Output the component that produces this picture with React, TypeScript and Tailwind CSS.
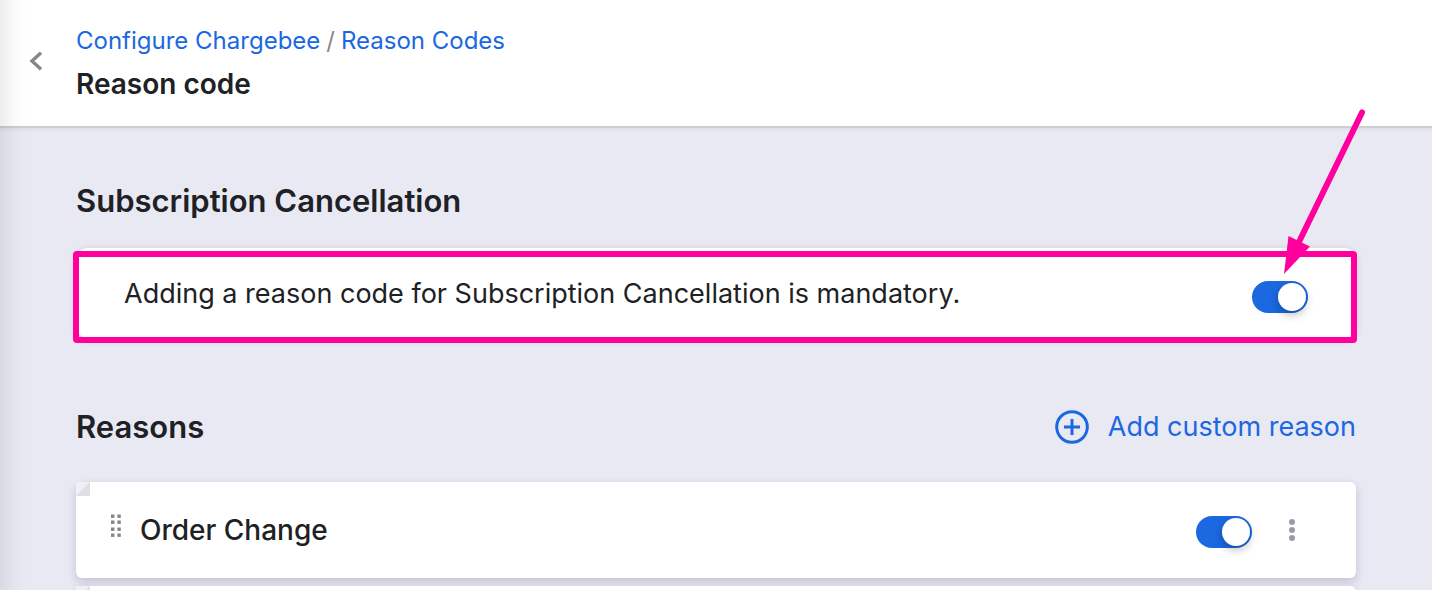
import { useState } from "react";

interface ToggleProps {
  label: string;
}

function Toggle({ label }: ToggleProps) {
  const [on, setOn] = useState(true);

  return (
    <input
      type="checkbox"
      role="switch"
      aria-label={label}
      checked={on}
      onChange={() => setOn(!on)}
      className="flex h-8 w-14 shrink-0 cursor-pointer appearance-none items-center rounded-full bg-gray-400 px-0.5 before:block before:size-7 before:rounded-full before:bg-white before:shadow-[0_4px_8px_rgba(0,0,0,0.25)] checked:justify-end checked:bg-[#1b68e0]"
    />
  );
}

function DragHandle() {
  return (
    <svg width="12" height="24" viewBox="0 0 12 24" fill="#858587" aria-hidden="true">
      {[0, 6, 13, 19].map((y) => (
        <g key={y}>
          <rect x="1" y={y + 0.5} width="3.4" height="3.4" />
          <rect x="7.4" y={y + 0.5} width="3.4" height="3.4" />
        </g>
      ))}
    </svg>
  );
}

function ReasonRow({ name }: { name?: string }) {
  return (
    <li className="flex h-24 shrink-0 rounded-md bg-white shadow-[0_4px_10px_rgba(40,40,90,0.2)]">
      <svg width="14" height="14" className="shrink-0" aria-hidden="true">
        <path d="M0 0H14V14H0Z" fill="#efeff4" />
        <path d="M14 0V14H0Z" fill="#dedee4" />
      </svg>
      {name && (
        <div className="flex flex-1 items-center pr-14 pl-5">
          <button type="button" aria-label={`Move ${name}`} className="mr-[18px] mb-2 cursor-grab">
            <DragHandle />
          </button>
          <span className="flex-1 text-[28px] font-medium">{name}</span>
          <div className="mt-1">
            <Toggle label={name} />
          </div>
          <button type="button" aria-label={`${name} options`} className="ml-8 flex w-4 justify-center">
            <svg width="8" height="24" viewBox="0 0 8 24" fill="#9a9aaa" aria-hidden="true">
              <circle cx="4" cy="4" r="3" />
              <circle cx="4" cy="12" r="3" />
              <circle cx="4" cy="20" r="3" />
            </svg>
          </button>
        </div>
      )}
    </li>
  );
}

// Points at the mandatory switch from the top right corner of the page
function Arrow() {
  return (
    <svg
      width="90"
      height="170"
      viewBox="0 0 90 170"
      className="pointer-events-none absolute -top-[140px] -right-3"
      aria-hidden="true"
    >
      <path d="M84 4.500L18 140" stroke="#ff009f" strokeWidth="6" strokeLinecap="round" />
      <path d="M10.500 128L32 138.500L6 166Z" fill="#ff009f" />
    </svg>
  );
}

export default function App() {
  return (
    <div className="relative flex h-screen flex-col overflow-hidden bg-[#e9e9f4] font-['Inter',sans-serif] text-[#202124]">
      <header className="flex items-center border-b-2 border-[#cecece] bg-white pt-6 pb-6 shadow-[0_1px_4px_rgba(0,0,0,0.08)]">
        <button type="button" aria-label="Back" className="mb-1 flex w-[76px] shrink-0 pl-7">
          <svg width="16" height="20" viewBox="0 0 16 20" fill="none" aria-hidden="true">
            <path d="M13 1.800L4 10L13 18.200" stroke="#87878b" strokeWidth="3.400" />
          </svg>
        </button>
        <div>
          <nav aria-label="Breadcrumb" className="flex gap-1.5 text-2xl leading-[34px]">
            <a href="#configure" className="text-[#1b68e0]">Configure Chargebee</a>
            <span className="text-[#87878b]">/</span>
            <a href="#reason-codes" className="text-[#1b68e0]">Reason Codes</a>
          </nav>
          <h1 className="mt-2 text-[28px] leading-9 font-semibold">Reason code</h1>
        </div>
      </header>

      <main className="px-[76px] pt-12">
        <h2 className="text-[31px] leading-[50px] font-semibold">Subscription Cancellation</h2>
        <section className="relative mt-[22px] flex items-center rounded-xl bg-white px-12 pt-6 pb-[22px] shadow-[0_2px_8px_rgba(40,40,90,0.16)]">
          <p className="flex-1 text-[27px] leading-[44px]">
            Adding a reason code for Subscription Cancellation is mandatory.
          </p>
          <div className="mt-1.5">
            <Toggle label="Adding a reason code for Subscription Cancellation is mandatory" />
          </div>
          <div className="pointer-events-none absolute top-[3px] -right-px -bottom-[5px] -left-[3px] rounded-sm border-6 border-[#ff009f]" />
          <Arrow />
        </section>

        <div className="mt-16 flex items-center justify-between">
          <h2 className="text-[31px] leading-[50px] font-semibold">Reasons</h2>
          <button type="button" className="flex items-center gap-[18px] text-[27px] text-[#1b68e0]">
            <svg width="36" height="36" viewBox="0 0 36 36" fill="none" stroke="#1b68e0" aria-hidden="true">
              <circle cx="18" cy="18" r="15.300" strokeWidth="3" />
              <path d="M18 10V26M10 18H26" strokeWidth="3" />
            </svg>
            Add custom reason
          </button>
        </div>
        <ul className="mt-[30px] flex flex-col gap-2">
          <ReasonRow name="Order Change" />
          <ReasonRow />
        </ul>
      </main>

      <div className="pointer-events-none absolute inset-y-0 left-0 w-7 bg-linear-to-r from-black/7 via-black/2 to-transparent" />
    </div>
  );
}
